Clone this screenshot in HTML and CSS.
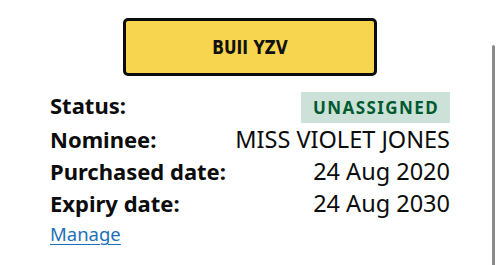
FILE: index.html
```html
<!DOCTYPE html>
<html>
<head>
<meta charset="utf-8">
<title>Registration</title>
<link rel="stylesheet" href="styles.css">
</head>
<body>
<div class="card">
	<div class="plate"><span class="plate-text">BUII YZV</span></div>

	<dl class="summary">
		<dt>Status:</dt>
		<dd><strong class="tag">UNASSIGNED</strong></dd>
		<dt>Nominee:</dt>
		<dd>MISS VIOLET JONES</dd>
		<dt>Purchased date:</dt>
		<dd>24 Aug 2020</dd>
		<dt>Expiry date:</dt>
		<dd>24 Aug 2030</dd>
	</dl>

	<a class="link" href="#">Manage</a>
</div>
<div class="scroll-thumb"></div>
</body>
</html>
```

FILE: styles.css
```css
body {
	margin: 0;
	background: #fff;
	color: #0b0c0c;
	font-family: "Noto Sans", "Liberation Sans", sans-serif;
}

.card {
	padding: 18px 50px 0 50px;
}

.plate {
	width: 248px;
	height: 52px;
	margin: 0 auto;
	background-color: #f8d54f;
	border: 3px solid #0b0c0c;
	border-radius: 5px;
	display: flex;
	align-items: center;
	justify-content: center;
}

.plate-text {
	display: inline-block;
	font-family: "DejaVu Sans Condensed", "DejaVu Sans", sans-serif;
	font-weight: bold;
	font-size: 20px;
	color: #111;
	transform: scaleX(0.86);
}

.summary {
	display: grid;
	grid-template-columns: auto 1fr;
	align-items: baseline;
	margin: 13px 0 0 0;
	font-size: 22px;
	line-height: 32px;
}

.summary dt {
	font-weight: bold;
}

.summary dd {
	margin: 0;
	text-align: right;
	font-size: 23.5px;
}

.tag {
	display: inline-block;
	background-color: #cce2d8;
	color: #005a30;
	font-size: 17px;
	line-height: 21px;
	letter-spacing: 1.4px;
	padding: 5px 11px 5px 12px;
	vertical-align: middle;
}

.link {
	display: inline-block;
	font-size: 18.5px;
	line-height: 30px;
	color: #1d70b8;
	text-decoration: underline;
	text-underline-offset: 3px;
	text-decoration-thickness: 1px;
}

.scroll-thumb {
	position: fixed;
	top: 45px;
	right: 5px;
	width: 3px;
	height: 230px;
	border-radius: 2px;
	background-color: #8a8a8a;
}
```
